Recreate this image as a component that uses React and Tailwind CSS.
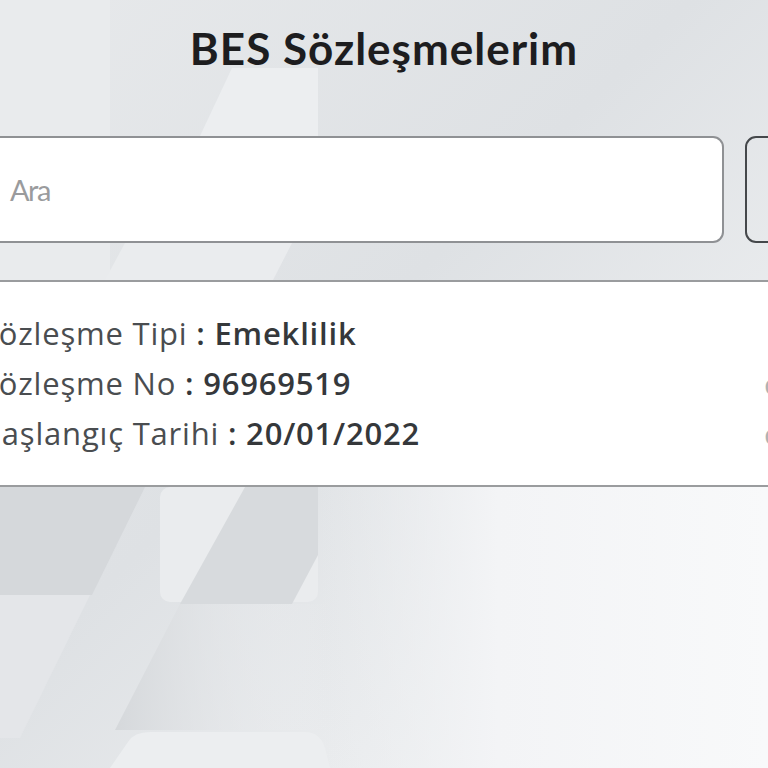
import React from "react";

const font = { fontFamily: "Lato, 'Open Sans', sans-serif" };
const bodyFont = { fontFamily: "'Open Sans', Lato, sans-serif" };

function Backdrop() {
    return (
        <svg className="absolute inset-0 h-full w-full" viewBox="0 0 768 768" preserveAspectRatio="none">
            <defs>
                <linearGradient id="base" x1="0" y1="0" x2="1" y2="1">
                    <stop offset="0" stopColor="#e7e9eb" />
                    <stop offset="0.45" stopColor="#dee1e4" />
                    <stop offset="1" stopColor="#f6f7f8" />
                </linearGradient>
                <linearGradient id="fadeR" x1="0" y1="0" x2="1" y2="0">
                    <stop offset="0" stopColor="#d5d8db" />
                    <stop offset="1" stopColor="#f1f2f4" stopOpacity="0" />
                </linearGradient>
                <linearGradient id="bottomRight" x1="0" y1="0" x2="1" y2="0">
                    <stop offset="0" stopColor="#eceef0" stopOpacity="0" />
                    <stop offset="0.4" stopColor="#f3f4f6" />
                    <stop offset="1" stopColor="#f8f9fa" />
                </linearGradient>
            </defs>
            <rect width="768" height="768" fill="url(#base)" />
            <rect x="0" y="0" width="110" height="280" fill="#e9ebed" />
            <polygon points="232,68 318,68 318,136 200,136" fill="#eceef0" />
            <polygon points="125,243 292,243 273,280 105,280" fill="#eaecee" />
            <rect x="318" y="487" width="450" height="281" fill="url(#bottomRight)" />
            <polygon points="0,487 145,487 92,595 0,595" fill="#d5d8db" />
            <rect x="160" y="487" width="158" height="115" rx="10" fill="#eaecee" />
            <polygon points="245,487 318,487 318,555 292,604 180,604" fill="#d7dadd" />
            <polygon points="0,595 90,595 20,738 0,738" fill="#e4e6e9" />
            <polygon points="180,604 330,604 330,730 115,730" fill="url(#fadeR)" />
            <path d="M110,768 L128,742 Q134,732 150,732 L305,732 Q320,732 325,748 L330,768 Z" fill="#eceef0" />
        </svg>
    );
}

function Row({ label, value, tail }) {
    return (
        <div className="flex h-[50px] items-center justify-between whitespace-nowrap" style={bodyFont}>
            <div className="text-[31px] leading-none tracking-[0.8px] text-[#4a4d50]">
                {label} <span className="font-semibold text-[#35383b]">: {value}</span>
            </div>
            {tail && <span className="mr-[-14px] text-[30px] leading-none text-[#b0b2b4]">o</span>}
        </div>
    );
}

export default function App() {
    return (
        <div className="relative h-[768px] w-[768px] overflow-hidden" style={font}>
            <Backdrop />
            <div className="relative flex flex-col">
                <h1 className="mt-[26px] text-center text-[44px] font-bold leading-none tracking-[1px] text-[#1d1d1f]">
                    BES Sözleşmelerim
                </h1>

                <div className="mt-[66px] flex gap-[21px]">
                    <div className="ml-[-20px] flex h-[107px] w-[744px] shrink-0 items-center rounded-[11px] border-2 border-[#8f9194] bg-white pl-[28px]">
                        <span className="text-[29px] tracking-[-1.5px] text-[#9a9b9d]">Ara</span>
                    </div>
                    <div className="h-[107px] w-[60px] shrink-0 rounded-[11px] border-2 border-[#45484b]" />
                </div>

                <div className="mt-[37px] border-y-2 border-[#9a9c9e] bg-white">
                    <div className="ml-[-19px] flex h-[203px] flex-col justify-center">
                        <Row label="Sözleşme Tipi" value="Emeklilik" />
                        <Row label="Sözleşme No" value="96969519" tail />
                        <Row label="Başlangıç Tarihi" value="20/01/2022" tail />
                    </div>
                </div>
            </div>
        </div>
    );
}
